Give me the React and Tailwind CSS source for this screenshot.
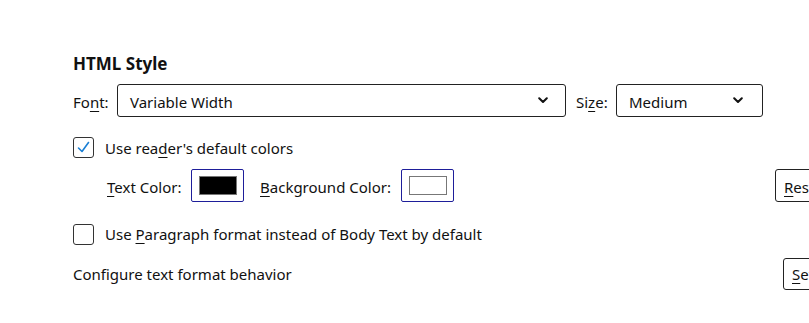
import React from "react";

function Chevron() {
  return (
    <svg width="10" height="7" viewBox="0 0 10 7" className="shrink-0">
      <path d="M1.2 1.2 L5 5 L8.8 1.2" fill="none" stroke="#111" strokeWidth="2" strokeLinecap="round" strokeLinejoin="round" />
    </svg>
  );
}

function U({ children }) {
  return <span className="underline underline-offset-[3px] decoration-[1px]">{children}</span>;
}

function Checkbox({ checked }) {
  return (
    <div className="w-[21px] h-[21px] rounded-[3px] border border-[#333] bg-white flex items-center justify-center shrink-0">
      {checked && (
        <svg width="15" height="15" viewBox="0 0 15 15">
          <path d="M2.5 8 L6 11.5 L12.5 2.5" fill="none" stroke="#1a7fd4" strokeWidth="1.6" strokeLinecap="round" strokeLinejoin="round" />
        </svg>
      )}
    </div>
  );
}

export default function App() {
  return (
    <div
      className="w-[809px] h-[323px] overflow-hidden bg-white text-[#111] text-[15px]"
      style={{ fontFamily: '"Noto Sans", "Open Sans", sans-serif' }}
    >
      <div className="w-[900px] pl-[73px] pt-[51px] flex flex-col">
        <div className="h-[26px] flex items-center text-[17px] font-bold">HTML Style</div>
        <div className="mt-[7px] flex items-center h-[33px]">
          <span className="w-[44px] pt-[3px]">Fo<U>n</U>t:</span>
          <div className="w-[449px] h-[33px] border border-[#222] rounded-[3px] flex items-center pl-[12px] pr-[17px] justify-between">
            <span className="pt-[3px]">Variable Width</span>
            <Chevron />
          </div>
          <span className="ml-[10px] w-[40px] pt-[3px]">Si<U>z</U>e:</span>
          <div className="w-[147px] h-[33px] border border-[#222] rounded-[3px] flex items-center pl-[12px] pr-[19px] justify-between">
            <span className="pt-[3px]">Medium</span>
            <Chevron />
          </div>
        </div>
        <div className="mt-[15px] flex items-center h-[30px]">
          <Checkbox checked />
          <span className="ml-[11px] pt-[3px]">Use rea<U>d</U>er's default colors</span>
        </div>
        <div className="mt-[7px] flex items-center h-[33px] pl-[34px]">
          <span className="w-[84px] pt-[4px]"><U>T</U>ext Color:</span>
          <div className="w-[53px] h-[33px] border border-[#1e1e9a] rounded-[2px] flex items-center justify-center">
            <div className="w-[38px] h-[19px] border border-[#777] bg-black"></div>
          </div>
          <span className="ml-[16px] w-[141px] pt-[4px]"><U>B</U>ackground Color:</span>
          <div className="w-[53px] h-[33px] border border-[#1e1e9a] rounded-[2px] flex items-center justify-center">
            <div className="w-[38px] h-[19px] border border-[#777] bg-white"></div>
          </div>
          <div className="ml-[321px] w-[80px] h-[33px] border border-[#222] rounded-[3px] flex items-center pl-[8px]">
            <span className="pt-[3px]"><U>R</U>eset</span>
          </div>
        </div>
        <div className="mt-[17px] flex items-center h-[30px]">
          <Checkbox />
          <span className="ml-[11px] pt-[1px]">Use <U>P</U>aragraph format instead of Body Text by default</span>
        </div>
        <div className="mt-[9px] flex items-center h-[32px]">
          <span className="w-[710px] pt-[1px]">Configure text format behavior</span>
          <div className="w-[80px] h-[32px] border border-[#222] rounded-[3px] flex items-center pl-[8px]">
            <span className="pt-[1px]"><U>S</U>et</span>
          </div>
        </div>
      </div>
    </div>
  );
}
